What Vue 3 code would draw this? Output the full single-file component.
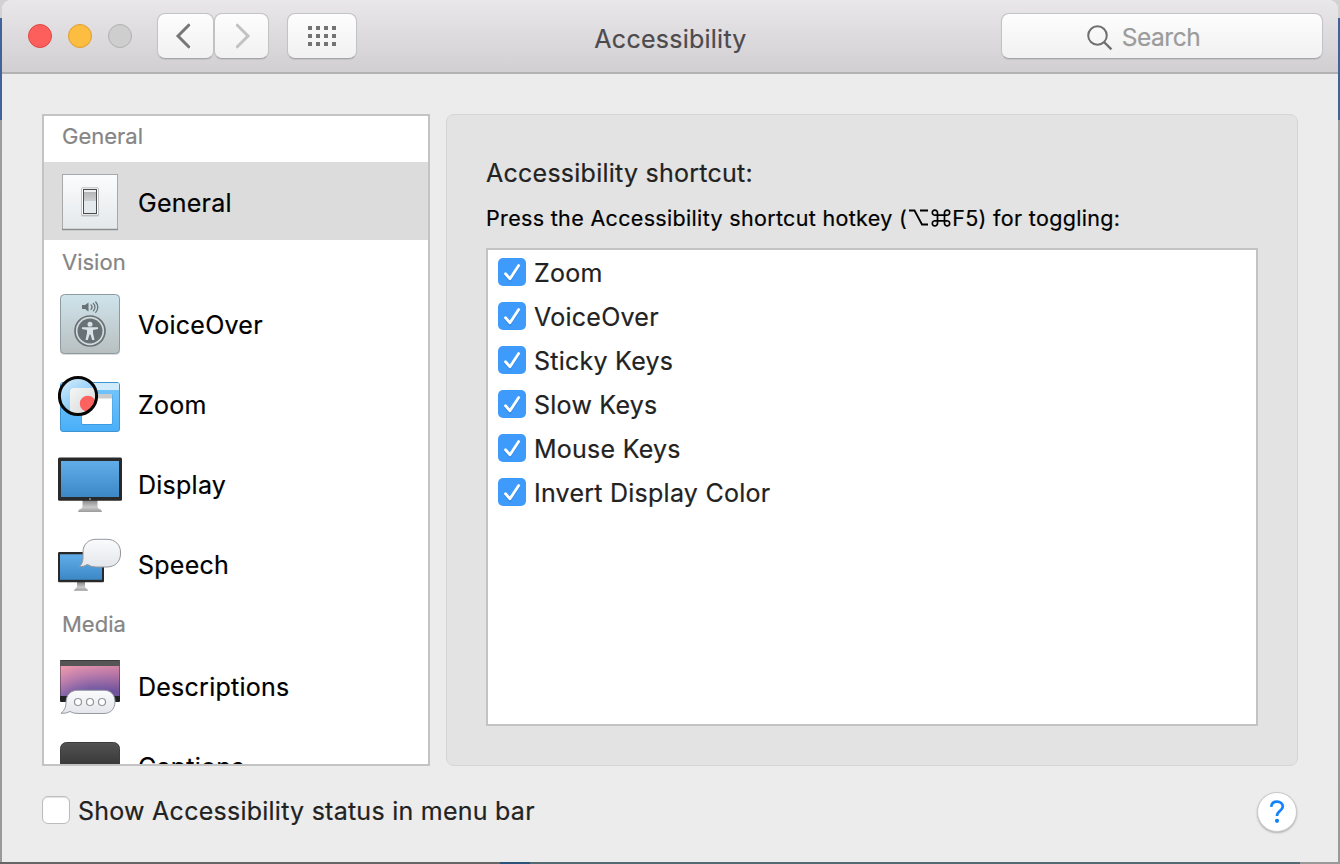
<script setup>
const groups = [
  { title: 'General', height: 'first', items: [{ name: 'General', icon: 'switch', selected: true }] },
  {
    title: 'Vision',
    items: [
      { name: 'VoiceOver', icon: 'voiceover' },
      { name: 'Zoom', icon: 'zoom' },
      { name: 'Display', icon: 'display' },
      { name: 'Speech', icon: 'speech' },
    ],
  },
  {
    title: 'Media',
    height: 'short',
    items: [
      { name: 'Descriptions', icon: 'descriptions' },
      { name: 'Captions', icon: 'captions' },
    ],
  },
]
const shortcuts = ['Zoom', 'VoiceOver', 'Sticky Keys', 'Slow Keys', 'Mouse Keys', 'Invert Display Color']
const dots = [0, 1, 2].flatMap((r) => [0, 1, 2, 3].map((c) => ({ x: c * 8, y: r * 8 })))
</script>

<template>
  <div class="desktop">
    <div class="window">
      <header class="titlebar">
        <div class="lights">
          <i class="light red"></i><i class="light yellow"></i><i class="light grey"></i>
        </div>
        <div class="nav">
          <button class="btn back">
            <svg width="16" height="26" viewBox="0 0 16 26"><path d="M13.7 2.2 L3 13 L13.7 23.8" fill="none" stroke="#777" stroke-width="3" stroke-linecap="round" stroke-linejoin="miter" /></svg>
          </button>
          <button class="btn forward">
            <svg width="16" height="26" viewBox="0 0 16 26"><path d="M2.3 2.2 L13 13 L2.3 23.8" fill="none" stroke="#c2c2c2" stroke-width="3" stroke-linecap="round" stroke-linejoin="miter" /></svg>
          </button>
        </div>
        <button class="btn grid">
          <svg width="28" height="20" viewBox="0 0 28 20"><rect v-for="(d, i) in dots" :key="i" :x="d.x" :y="d.y" width="4" height="4" fill="#737373" /></svg>
        </button>
        <h1 class="title">Accessibility</h1>
        <div class="search">
          <svg width="26" height="26" viewBox="0 0 26 26"><circle cx="10.5" cy="10.5" r="9.3" fill="none" stroke="#6f6f6f" stroke-width="2" /><path d="M17 17 L24.4 24.4" stroke="#6f6f6f" stroke-width="2.4" /></svg>
          <span>Search</span>
        </div>
      </header>

      <main class="body">
        <div class="columns">
          <nav class="sidebar">
            <section v-for="g in groups" :key="g.title">
              <h2 class="group" :class="g.height">{{ g.title }}</h2>
              <div v-for="it in g.items" :key="it.name" class="item" :class="{ selected: it.selected }">
                <svg v-if="it.icon === 'switch'" class="icon" width="64" height="64" viewBox="0 0 64 64">
                  <defs>
                    <linearGradient id="sw1" x2="0" y2="1"><stop stop-color="#fbfcfd" /><stop offset="1" stop-color="#e4e8eb" /></linearGradient>
                    <linearGradient id="sw2" x2="0" y2="1"><stop stop-color="#b4b6b8" /><stop offset="1" stop-color="#cdd0d2" /></linearGradient>
                  </defs>
                  <rect x="4.5" y="4.5" width="55" height="55" fill="url(#sw1)" stroke="#a6a9ab" />
                  <path d="M4 59.5H60" stroke="#8b8e91" stroke-width="1.4" />
                  <rect x="23" y="17.5" width="18" height="29" rx="1.5" fill="#8f9498" opacity=".45" />
                  <rect x="23.5" y="18" width="17" height="27" rx="1" fill="#fff" stroke="#b3b4b6" stroke-width=".7" />
                  <rect x="25.5" y="19.5" width="13" height="24" fill="#e3e9ec" stroke="#4b4c4e" />
                  <rect x="26" y="20" width="12" height="2" fill="#f1f1f1" />
                  <rect x="26" y="22" width="12" height="9" fill="url(#sw2)" />
                </svg>
                <svg v-else-if="it.icon === 'voiceover'" class="icon" width="64" height="64" viewBox="0 0 64 64">
                  <defs><linearGradient id="vo" x2="0" y2="1"><stop stop-color="#cfe4ec" /><stop offset="1" stop-color="#b8bfc0" /></linearGradient></defs>
                  <rect x="2" y="3" width="60" height="60" rx="4" fill="#ddd" />
                  <rect x="2.5" y="2.5" width="59" height="59" rx="4" fill="url(#vo)" stroke="#8d9a9f" />
                  <g fill="none" stroke="#687175" stroke-width="1.2" stroke-linecap="round">
                    <path d="M33 12.8 Q35.2 15 33 17.4" /><path d="M35.4 11.5 Q38.6 15 35.4 18.8" /><path d="M37.7 10 Q42 15 37.7 20.4" />
                  </g>
                  <path d="M24 13H27L30.5 10.5V19.5L27 17H24Z" fill="#687175" />
                  <circle cx="32" cy="39" r="15" fill="#d3dbdd" stroke="#687175" stroke-width="1.7" />
                  <circle cx="32" cy="39" r="12.5" fill="#687175" />
                  <circle cx="32" cy="32.2" r="2.5" fill="#d9e3e6" />
                  <path d="M24 35.2H40V37L35 38V41L36.5 48H34.2L32.5 42.5H31.5L29.8 48H27.5L29 41V38L24 37Z" fill="#d9e3e6" />
                </svg>
                <svg v-else-if="it.icon === 'zoom'" class="icon" width="64" height="64" viewBox="0 0 64 64">
                  <defs>
                    <linearGradient id="zm" x2="0" y2="1"><stop stop-color="#78c7fa" /><stop offset="1" stop-color="#49aff9" /></linearGradient>
                    <linearGradient id="zl" x2=".7" y2="1"><stop stop-color="#dff1fd" /><stop offset="1" stop-color="#65baf5" /></linearGradient>
                    <linearGradient id="zg" x2="1" y2="1"><stop stop-color="#f4f5f5" /><stop offset="1" stop-color="#cfd0d1" /></linearGradient>
                    <clipPath id="lens"><circle cx="20" cy="24" r="18.4" /></clipPath>
                  </defs>
                  <rect x="2.5" y="10.5" width="59" height="49" rx="2.5" fill="url(#zm)" stroke="#3f94cf" />
                  <path d="M3 18V12Q3 11 5 11H59Q61 11 61 12V18Z" fill="#d0ecfc" />
                  <rect x="23.5" y="22" width="31" height="31" rx="1.5" fill="#328dcb" opacity=".6" />
                  <rect x="24" y="22" width="30" height="30" rx="1" fill="#fff" /><rect x="24" y="22" width="30" height="4.5" fill="#c9cccf" />
                  <g clip-path="url(#lens)"><circle cx="20" cy="24" r="19" fill="url(#zl)" /><rect x="12" y="16" width="32" height="32" rx="4" fill="url(#zg)" /><circle cx="29.8" cy="31.7" r="8" fill="#fb6260" /></g>
                  <circle cx="20" cy="24" r="18.6" fill="none" stroke="#060606" stroke-width="3" />
                </svg>
                <svg v-else-if="it.icon === 'display'" class="icon" width="64" height="64" viewBox="0 0 64 64">
                  <defs>
                    <linearGradient id="ds" x2="0" y2="1"><stop stop-color="#60adea" /><stop offset="1" stop-color="#3c88c6" /></linearGradient>
                    <linearGradient id="st" x2="0" y2="1"><stop stop-color="#858585" /><stop offset=".6" stop-color="#cacaca" /><stop offset="1" stop-color="#9a9a9a" /></linearGradient>
                  </defs>
                  <path d="M24.5 48H39.5V54Q39.5 57 43 57.5L44 60H20L21 57.5Q24.5 57 24.5 54Z" fill="url(#st)" />
                  <rect x="0" y="5.4" width="64" height="43.4" rx="1.5" fill="#292929" />
                  <rect x="3" y="9" width="58" height="36" fill="url(#ds)" /><circle cx="32" cy="47" r=".9" fill="#999" />
                </svg>
                <svg v-else-if="it.icon === 'speech'" class="icon" width="64" height="64" viewBox="0 0 64 64">
                  <defs><linearGradient id="bub" x2="0" y2="1"><stop stop-color="#fbfbfd" /><stop offset="1" stop-color="#e3e6eb" /></linearGradient></defs>
                  <path d="M19 50H27V55L30 58V58.8H16V58L19 55Z" fill="url(#st)" />
                  <rect x="0" y="20" width="46" height="30.3" rx="1.2" fill="#292929" />
                  <rect x="2" y="22.3" width="42" height="25.5" fill="url(#ds)" />
                  <path d="M38 7.3H49C57 7.3 62.5 12.8 62.5 20V22C62.5 29.5 57 35 49 35H38Q33 35 29.5 32.5Q26 34.8 21 34.8Q25 32 25 25V20C25 12.8 30 7.3 38 7.3Z" fill="url(#bub)" stroke="#93969b" />
                </svg>
                <svg v-else-if="it.icon === 'descriptions'" class="icon" width="64" height="64" viewBox="0 0 64 64">
                  <defs>
                    <linearGradient id="sky" x2=".2" y2="1"><stop stop-color="#f19baa" /><stop offset=".4" stop-color="#bd7cac" /><stop offset="1" stop-color="#574ca0" /></linearGradient>
                    <linearGradient id="glow" x2="1" y2="0"><stop stop-color="#f6a2b6" stop-opacity=".3" /><stop offset=".5" stop-color="#8d67a9" stop-opacity=".1" /><stop offset="1" stop-color="#c46b8d" stop-opacity=".25" /></linearGradient>
                  </defs>
                  <rect x="2" y="6" width="60" height="42" rx="1" fill="#222224" /><rect x="2" y="6.5" width="60" height="5.5" fill="#555" />
                  <rect x="2.5" y="12" width="59" height="30" fill="url(#sky)" /><rect x="2.5" y="12" width="59" height="30" fill="url(#glow)" />
                  <path d="M20 36.3H46C52.5 36.3 57 40.7 57 47.5C57 55 52.5 59.5 46 59.5H20Q15 59.5 12 57.5Q8 59.7 3 59.3Q8 55.5 8 49C8 40.8 12.5 36.3 20 36.3Z" fill="url(#bub)" stroke="#9699a0" />
                  <g fill="#fff" stroke="#919498" stroke-width="1.2"><circle cx="20" cy="48" r="3.5" /><circle cx="32" cy="48" r="3.5" /><circle cx="44" cy="48" r="3.5" /></g>
                </svg>
                <svg v-else class="icon" width="64" height="64" viewBox="0 0 64 64">
                  <defs><linearGradient id="cc" x2="0" y2="1"><stop stop-color="#535353" /><stop offset=".5" stop-color="#343434" /></linearGradient></defs>
                  <rect x="2.5" y="8.5" width="59" height="52" rx="6" fill="url(#cc)" stroke="#3d3d3d" />
                </svg>
                <span>{{ it.name }}</span>
              </div>
            </section>
          </nav>

          <section class="panel">
            <h3 class="heading">Accessibility shortcut:</h3>
            <p class="hint">Press the Accessibility shortcut hotkey (<svg class="key" width="21" height="17" viewBox="0 0 21 17" aria-label="Option"><path d="M1 1.5H6.5L14 15.5H20M12 1.5H20" fill="none" stroke="#000" stroke-width="1.8" /></svg><svg class="key cmd" width="20" height="18" viewBox="0 0 20 18" aria-label="Command"><path d="M6.5 6.2H13.5V11.8H6.5ZM6.5 6.2H4.3A2.6 2.6 0 1 1 6.5 3.7ZM13.5 6.2V3.7A2.6 2.6 0 1 1 15.7 6.2ZM13.5 11.8H15.7A2.6 2.6 0 1 1 13.5 14.3ZM6.5 11.8V14.3A2.6 2.6 0 1 1 4.3 11.8Z" fill="none" stroke="#000" stroke-width="1.7" /></svg>F5) for toggling:</p>
            <div class="list">
              <label v-for="s in shortcuts" :key="s" class="row">
                <svg width="28" height="28" viewBox="0 0 28 28">
                  <rect width="28" height="28" rx="5" fill="#3f9bfb" />
                  <path d="M7.5 16.5 L12 21.5 L20.7 8.2" transform="translate(0 .8)" fill="none" stroke="#2476cb" stroke-opacity=".45" stroke-width="2.8" stroke-linecap="round" />
                  <path d="M7.5 15.7 L12 20.8 L20.7 7.6" fill="none" stroke="#fff" stroke-width="2.8" stroke-linecap="round" stroke-linejoin="round" />
                </svg>
                <span>{{ s }}</span>
              </label>
            </div>
          </section>
        </div>

        <footer class="footer">
          <label class="status"><i class="box"></i><span>Show Accessibility status in menu bar</span></label>
          <button class="help">
            <svg width="16" height="24" viewBox="0 0 16 24"><path d="M2.2 6.8C2.5 3.6 4.8 1.7 8 1.7C11.3 1.7 13.8 3.6 13.8 6.6C13.8 10.8 8 10.9 8 16" fill="none" stroke="#1482fb" stroke-width="2.7" /><circle cx="8" cy="20.8" r="2.1" fill="#1482fb" /></svg>
          </button>
        </footer>
      </main>
    </div>
    <div class="strip"></div>
  </div>
</template>

<style>
body { overflow: hidden; }
</style>

<style scoped>
* { box-sizing: border-box; }
.desktop {
  width: 1340px; height: 864px; padding: 0 2px; overflow: hidden;
  display: flex; flex-direction: column;
  background: linear-gradient(#d2d2d4 0 18px, #41639a 18px, #41639a 120px, #9c9c9c 120px, #999 100%);
  font-family: Inter, "Liberation Sans", sans-serif; font-size: 25px; color: #222;
  letter-spacing: .25px; -webkit-text-stroke: .2px currentColor;
}
.window { height: 862px; background: #ececec; border-radius: 9px 9px 0 0; overflow: hidden; }
.strip { height: 2px; margin: 0 -2px; background: linear-gradient(90deg, #666 0 500px, #2b5279 500px 530px, #536a70 530px 1300px, #999 1300px); }
h1, h2, h3, p { margin: 0; font-weight: 400; white-space: nowrap; }
button { padding: 0; border: 0; font: inherit; }
svg { display: block; flex: none; }
.titlebar {
  height: 74px; padding: 13px 15px 0 26px; display: flex; align-items: flex-start;
  background: linear-gradient(#e9e7e9, #d1cfd2); border-bottom: 2px solid #b3b1b4;
}
.lights { display: flex; gap: 16px; padding-top: 11px; width: 129px; }
.light { width: 24px; height: 24px; border-radius: 50%; border: 1px solid; }
.red { background: #fd605c; border-color: #df4744; }
.yellow { background: #fdbd40; border-color: #dd9d33; }
.grey { background: #cecece; border-color: #b0b0b1; }
.nav { display: flex; width: 130px; }
.btn, .search {
  height: 46px; border: 1px solid #c3c2c4; border-bottom-color: #a5a4a6; border-radius: 8px;
  background: linear-gradient(#fdfdfd, #f1f1f1); display: flex; align-items: center; justify-content: center;
  box-shadow: 0 1px 1px rgba(0,0,0,.08);
}
.back { width: 57px; padding: 0 5px 0 0; }
.forward { width: 55px; padding-left: 2px; }
.grid { width: 70px; }
.title { flex: 1; text-align: center; font-size: 25px; line-height: 52px; color: #4c4a4d; padding-right: 17px; }
.search { width: 322px; gap: 9px; color: #9b9b9b; padding-right: 37px; }
.search svg { margin-top: 3px; }
.search span { font-size: 24.5px; letter-spacing: -.5px; line-height: 46px; padding-top: 2px; }
.body { padding: 40px 40px 0; }
.columns { display: flex; gap: 16px; height: 652px; }
.sidebar { width: 388px; height: 652px; border: 2px solid #c3c3c3; background: #fff; overflow: hidden; color: #000; }
.group { height: 44px; line-height: 45px; padding-left: 18px; font-size: 22px; letter-spacing: 0; color: #858585; }
.group.first { height: 46px; line-height: 40px; }
.group.short { height: 42px; line-height: 41px; }
.item { height: 80px; display: flex; align-items: center; gap: 16px; padding-left: 14px; }
.item span { padding-top: 2px; }
.item.selected { height: 78px; background: #dcdcdc; padding-top: 2px; }
.panel { width: 852px; border: 1px solid #d5d5d5; border-radius: 8px; background: #e3e3e3; padding: 38px 39px 0; }
.heading { font-size: 25px; line-height: 40px; }
.hint { color: #000; font-size: 21.5px; letter-spacing: .33px; line-height: 30px; margin-top: 10px; height: 45px; display: flex; white-space: pre; }
.key { margin: 6px 1px 0; }
.list { height: 478px; width: 772px; background: #fff; border: 2px solid #c3c3c3; padding: 0 10px; }
.row { height: 44px; display: flex; align-items: center; gap: 8px; }
.row span { padding-top: 1px; }
.footer { display: flex; justify-content: space-between; padding: 26px 1px 0 0; }
.status { display: flex; gap: 8px; height: 36px; align-items: center; white-space: nowrap; }
.status span { padding-top: 2px; }
.box { width: 28px; height: 28px; background: #fff; border: 1px solid #bcbcbc; border-radius: 6px; box-shadow: inset 0 1px 1px #e3e3e3; }
.help {
  width: 40px; height: 40px; border-radius: 50%; background: #fff; border: 1px solid #c9c9c9;
  box-shadow: 0 1px 2px rgba(0,0,0,.25); display: flex; align-items: center; justify-content: center;
}
</style>
